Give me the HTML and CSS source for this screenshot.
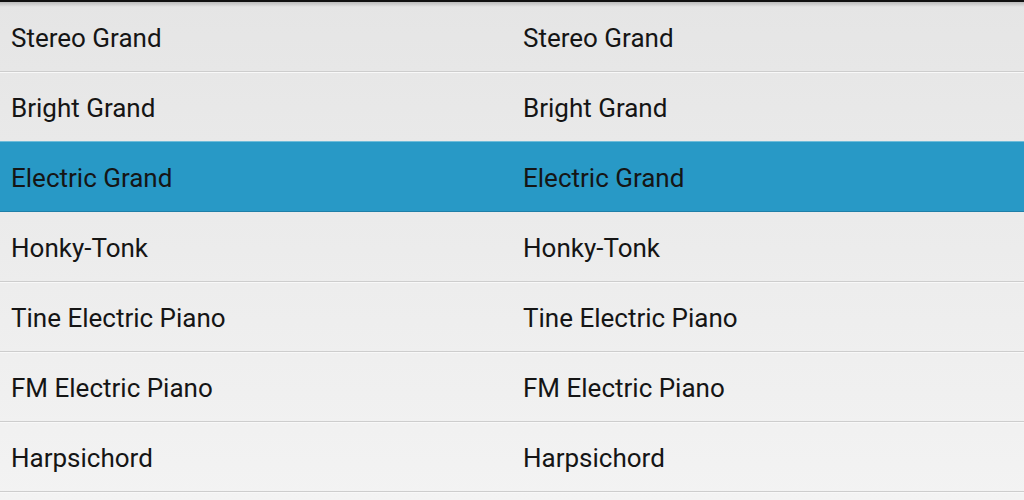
FILE: index.html
```html
<!DOCTYPE html>
<html>
<head>
<meta charset="utf-8">
<link rel="stylesheet" href="styles.css">
</head>
<body>
<div class="topbar"></div>
<ul class="list">
  <li class="row"><span class="cell">Stereo Grand</span><span class="cell">Stereo Grand</span></li>
  <li class="row"><span class="cell">Bright Grand</span><span class="cell">Bright Grand</span></li>
  <li class="row selected"><span class="cell">Electric Grand</span><span class="cell">Electric Grand</span></li>
  <li class="row"><span class="cell">Honky-Tonk</span><span class="cell">Honky-Tonk</span></li>
  <li class="row"><span class="cell">Tine Electric Piano</span><span class="cell">Tine Electric Piano</span></li>
  <li class="row"><span class="cell">FM Electric Piano</span><span class="cell">FM Electric Piano</span></li>
  <li class="row"><span class="cell">Harpsichord</span><span class="cell">Harpsichord</span></li>
</ul>
</body>
</html>
```
FILE: styles.css
```css
html, body {
  margin: 0;
  padding: 0;
  height: 500px;
  overflow: hidden;
}
body {
  background: linear-gradient(#e5e5e5, #f3f3f3);
  font-family: Roboto, "Liberation Sans", sans-serif;
  color: #151515;
}
.topbar {
  height: 2px;
  background: #111;
  position: relative;
}
.topbar::after {
  content: "";
  position: absolute;
  left: 0;
  right: 0;
  top: 2px;
  height: 5px;
  background: linear-gradient(rgba(0,0,0,0.18), rgba(0,0,0,0));
}
.list {
  list-style: none;
  margin: 0;
  padding: 0;
}
.row {
  display: grid;
  grid-template-columns: 512px 512px;
  height: 69px;
  align-items: center;
  border-bottom: 1px solid #cdcdcd;
  box-shadow: 0 1px 0 #f8f8f8;
  font-size: 26px;
}
.cell {
  padding-left: 11px;
  padding-top: 2px;
}
.selected {
  background: #2899c6;
  box-shadow: 0 -1px 0 #6fbcd9;
  border-bottom-color: #1f7fa8;
}
```
